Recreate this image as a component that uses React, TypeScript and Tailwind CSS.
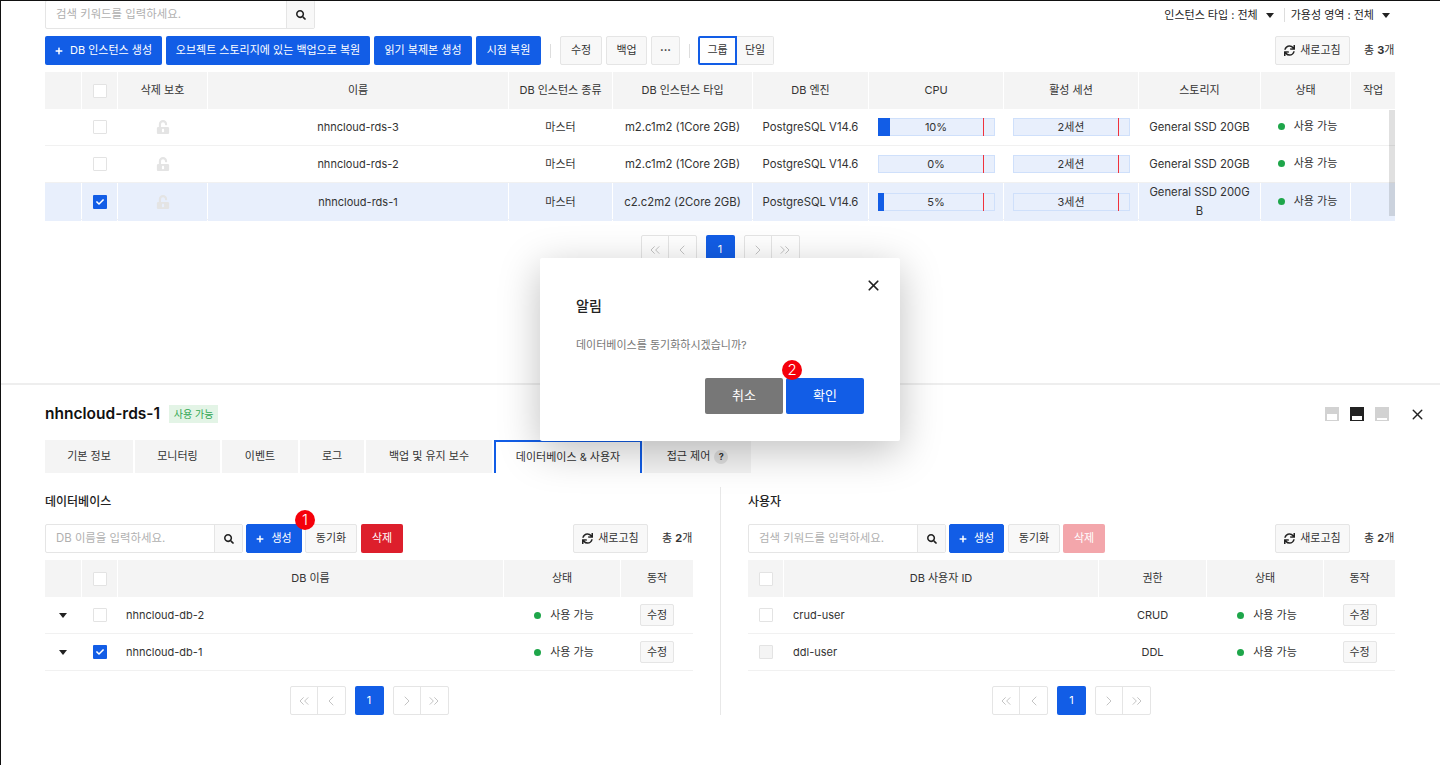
import { FaCheck, FaPlus, FaSearch, FaSync, FaUnlockAlt } from "react-icons/fa";
import { LuChevronLeft, LuChevronRight, LuChevronsLeft, LuChevronsRight, LuX } from "react-icons/lu";
import { ReactNode } from "react";

const font = "font-['Inter','Noto_Sans_CJK_KR',sans-serif]";
const mainCols = "grid-cols-[36px_35px_89px_300px_103px_139px_115px_134px_134px_121px_89px_44px]";
const dbCols = "grid-cols-[36px_35px_385px_116px_72px]";
const userCols = "grid-cols-[35px_314px_107px_116px_71px]";

function Checkbox({ checked, disabled }: { checked?: boolean; disabled?: boolean }) {
  if (checked) {
    return (
      <span className="flex h-[14px] w-[14px] items-center justify-center rounded-[1px] bg-[#125de6] text-white">
        <FaCheck size={8} />
      </span>
    );
  }
  return <span className={`block h-[14px] w-[14px] rounded-[1px] border border-[#e3e3e3] ${disabled ? "bg-[#f4f4f4]" : "bg-white"}`} />;
}

function Btn({ children, className = "" }: { children: ReactNode; className?: string }) {
  return (
    <button className={`flex h-[29px] items-center justify-center rounded-[2px] border border-[#e5e5e5] bg-[#f8f8f8] text-[11px] text-[#333] ${className}`}>
      {children}
    </button>
  );
}

function EditBtn() {
  return (
    <button className="flex h-[22px] w-[34px] items-center justify-center rounded-[2px] border border-[#e5e5e5] bg-[#f8f8f8] text-[11px] text-[#333]">
      수정
    </button>
  );
}

function Primary({ children, className = "" }: { children: ReactNode; className?: string }) {
  return (
    <button className={`flex h-[29px] items-center justify-center gap-[7px] rounded-[2px] bg-[#125de6] text-[11px] text-white ${className}`}>
      {children}
    </button>
  );
}

function Search({ placeholder, width }: { placeholder: string; width: string }) {
  return (
    <div className={`flex h-[29px] rounded-[2px] border border-[#e5e5e5] bg-white ${width}`}>
      <span className="flex flex-1 items-center pl-[10px] text-[11.4px] text-[#b0b0b0]">{placeholder}</span>
      <span className="flex w-[28px] items-center justify-center border-l border-[#e5e5e5] bg-[#f8f8f8] text-[#222]">
        <FaSearch size={10} />
      </span>
    </div>
  );
}

function Refresh() {
  return (
    <Btn className="w-[75px] gap-[5px]">
      <FaSync size={11} className="text-[#222]" />
      새로고침
    </Btn>
  );
}

function Total({ n }: { n: number }) {
  return (
    <span className="w-[31px] whitespace-nowrap text-[11px] text-[#333]">
      총 <b className="font-bold">{n}</b>개
    </span>
  );
}

function HeadCell({ children }: { children?: ReactNode }) {
  return <div className="flex items-center justify-center bg-[#f4f4f4] text-[11px] text-[#333]">{children}</div>;
}

function Cell({ children, className = "" }: { children?: ReactNode; className?: string }) {
  return <div className={`flex items-center justify-center text-center text-[11px] text-[#333] ${className}`}>{children}</div>;
}

function Status({ nudge }: { nudge?: boolean }) {
  return (
    <span className={`ml-[4px] flex items-center gap-[9px] text-[11px] text-[#333] ${nudge ? "-mt-[2px]" : ""}`}>
      <i className="block h-[7px] w-[7px] rounded-full bg-[#1ea64a]" />
      사용 가능
    </span>
  );
}

function Gauge({ label, fill = 0, mark }: { label: string; fill?: number; mark: number }) {
  return (
    <div className="relative flex h-[18px] w-[117px] items-center justify-center border border-[#cfe0fb] bg-[#e8effc] text-[11px] text-[#333]">
      {fill > 0 && <span className="absolute -inset-y-px -left-px bg-[#125de6]" style={{ width: fill }} />}
      <span className="absolute -inset-y-px w-px bg-[#f0323c]" style={{ left: mark }} />
      {label}
    </div>
  );
}

function Pager({ className = "" }: { className?: string }) {
  const cell = "flex h-full w-[27px] items-center justify-center text-[#c4c4c4]";
  return (
    <div className={`flex h-[29px] justify-center gap-[9px] ${className}`}>
      <div className="flex divide-x divide-[#e5e5e5] rounded-[2px] border border-[#e5e5e5]">
        <span className={cell}><LuChevronsLeft size={16} strokeWidth={1.5} /></span>
        <span className={cell}><LuChevronLeft size={16} strokeWidth={1.5} /></span>
      </div>
      <span className="flex w-[29px] items-center justify-center rounded-[2px] bg-[#125de6] text-[11px] text-white">1</span>
      <div className="flex divide-x divide-[#e5e5e5] rounded-[2px] border border-[#e5e5e5]">
        <span className={cell}><LuChevronRight size={16} strokeWidth={1.5} /></span>
        <span className={cell}><LuChevronsRight size={16} strokeWidth={1.5} /></span>
      </div>
    </div>
  );
}

function Caret({ className = "" }: { className?: string }) {
  return <span className={`block h-0 w-0 border-x-[4px] border-t-[5px] border-x-transparent border-t-[#222] ${className}`} />;
}

function Marker({ n, className = "" }: { n: number; className?: string }) {
  return (
    <span className={`absolute flex h-[20px] w-[20px] items-center justify-center rounded-full bg-[#f5000a] text-[15px] font-light text-white ${className}`}>
      {n}
    </span>
  );
}

const instances = [
  { name: "nhncloud-rds-3", type: "m2.c1m2 (1Core 2GB)", cpu: "10%", fill: 12, session: "2세션", storage: "General SSD 20GB" },
  { name: "nhncloud-rds-2", type: "m2.c1m2 (1Core 2GB)", cpu: "0%", fill: 0, session: "2세션", storage: "General SSD 20GB" },
  { name: "nhncloud-rds-1", type: "c2.c2m2 (2Core 2GB)", cpu: "5%", fill: 6, session: "3세션", storage: "General SSD 200GB", selected: true },
];

const mainHead = ["", "", "삭제 보호", "이름", "DB 인스턴스 종류", "DB 인스턴스 타입", "DB 엔진", "CPU", "활성 세션", "스토리지", "상태", "작업"];
const tabs = [
  ["기본 정보", "w-[88px]"],
  ["모니터링", "w-[85px]"],
  ["이벤트", "w-[76px]"],
  ["로그", "w-[64px]"],
  ["백업 및 유지 보수", "w-[126px]"],
];

function InstanceTable() {
  return (
    <div className="relative mt-[7px]">
      <div className={`grid h-[37px] gap-x-px ${mainCols}`}>
        {mainHead.map((h, i) => (
          <HeadCell key={i}>{i === 1 ? <Checkbox /> : h}</HeadCell>
        ))}
      </div>
      {instances.map((r) => (
        <div
          key={r.name}
          className={`grid h-[37px] gap-x-px border-b border-[#f1f1f1] ${mainCols} ${r.selected ? "[&>div]:bg-[#e8effc]" : ""}`}
        >
          <Cell />
          <Cell><Checkbox checked={r.selected} /></Cell>
          <Cell className="text-[#e4e4e4]"><FaUnlockAlt size={14} /></Cell>
          <Cell>{r.name}</Cell>
          <Cell>마스터</Cell>
          <Cell><span className="text-[11.3px]">{r.type}</span></Cell>
          <Cell><span className="text-[11.3px]">PostgreSQL V14.6</span></Cell>
          <Cell><Gauge label={r.cpu} fill={r.fill} mark={104} /></Cell>
          <Cell><Gauge label={r.session} mark={104} /></Cell>
          <Cell className="px-[10px] leading-[19px] break-all"><span className="text-[11.3px]">{r.storage}</span></Cell>
          <Cell><Status nudge /></Cell>
          <Cell />
        </div>
      ))}
      <span className="absolute right-0 top-[38px] h-[106px] w-[6px] bg-[#000]/12" />
    </div>
  );
}

function DbPanel() {
  return (
    <section className="w-[648px]">
      <h3 className="text-xs font-medium leading-[18px] text-[#222]">데이터베이스</h3>
      <div className="relative mt-[13px] flex items-center">
        <Search placeholder="DB 이름을 입력하세요." width="w-[198px]" />
        <Primary className="ml-[3px] w-[56px] border border-[#125de6]"><FaPlus size={8} />생성</Primary>
        <Btn className="ml-[3px] w-[52px]">동기화</Btn>
        <button className="ml-[4px] flex h-[29px] w-[42px] items-center justify-center rounded-[2px] bg-[#dd1f2c] text-[11px] text-white">삭제</button>
        <Marker n={1} className="left-[250px] -top-[14px]" />
        <div className="ml-auto flex items-center gap-[14px]">
          <Refresh />
          <Total n={2} />
        </div>
      </div>
      <div className={`mt-[7px] grid h-[37px] gap-x-px ${dbCols}`}>
        <HeadCell />
        <HeadCell><Checkbox /></HeadCell>
        <HeadCell>DB 이름</HeadCell>
        <HeadCell>상태</HeadCell>
        <HeadCell>동작</HeadCell>
      </div>
      {[
        { name: "nhncloud-db-2", checked: false },
        { name: "nhncloud-db-1", checked: true },
      ].map((r) => (
        <div key={r.name} className={`grid h-[37px] gap-x-px border-b border-[#f1f1f1] ${dbCols}`}>
          <Cell><Caret /></Cell>
          <Cell><Checkbox checked={r.checked} /></Cell>
          <Cell className="justify-start pl-[8px]">{r.name}</Cell>
          <Cell><Status /></Cell>
          <Cell><EditBtn /></Cell>
        </div>
      ))}
      <Pager className="mt-[15px]" />
    </section>
  );
}

function UserPanel() {
  return (
    <section className="w-[647px]">
      <h3 className="text-xs font-medium leading-[18px] text-[#222]">사용자</h3>
      <div className="mt-[13px] flex items-center">
        <Search placeholder="검색 키워드를 입력하세요." width="w-[198px]" />
        <Primary className="ml-[3px] w-[55px] border border-[#125de6]"><FaPlus size={8} />생성</Primary>
        <Btn className="ml-[4px] w-[52px]">동기화</Btn>
        <button className="ml-[3px] flex h-[29px] w-[42px] items-center justify-center rounded-[2px] bg-[#f3a6ab] text-[11px] text-white">삭제</button>
        <div className="ml-auto flex items-center gap-[14px]">
          <Refresh />
          <Total n={2} />
        </div>
      </div>
      <div className={`mt-[7px] grid h-[37px] gap-x-px ${userCols}`}>
        <HeadCell><Checkbox /></HeadCell>
        <HeadCell>DB 사용자 ID</HeadCell>
        <HeadCell>권한</HeadCell>
        <HeadCell>상태</HeadCell>
        <HeadCell>동작</HeadCell>
      </div>
      {[
        { id: "crud-user", role: "CRUD", disabled: false },
        { id: "ddl-user", role: "DDL", disabled: true },
      ].map((r) => (
        <div key={r.id} className={`grid h-[37px] gap-x-px border-b border-[#f1f1f1] ${userCols}`}>
          <Cell><Checkbox disabled={r.disabled} /></Cell>
          <Cell className="justify-start pl-[9px]">{r.id}</Cell>
          <Cell>{r.role}</Cell>
          <Cell><Status /></Cell>
          <Cell><EditBtn /></Cell>
        </div>
      ))}
      <Pager className="mt-[15px]" />
    </section>
  );
}

function LayoutIcon({ tone, bar }: { tone: string; bar: string }) {
  return (
    <span className={`relative block h-[14px] w-[14px] ${tone}`}>
      <i className={`absolute inset-x-[2px] bottom-[1px] block bg-white ${bar}`} />
    </span>
  );
}

export default function App() {
  return (
    <div className={`relative h-[765px] w-[1440px] overflow-hidden border-l border-t border-[#111] bg-white ${font}`}>
      <div className="h-[382px] pl-[44px] pr-[45px]">
        <div className="flex items-start justify-between">
          <div className="-mt-px">
            <Search placeholder="검색 키워드를 입력하세요." width="w-[270px]" />
          </div>
          <div className="mt-[6px] flex items-center pr-[5px] text-[11px] text-[#222]">
            인스턴스 타입 : 전체
            <Caret className="ml-[8px]" />
            <span className="ml-[10px] mr-[6px] h-[14px] w-px bg-[#ddd]" />
            가용성 영역 : 전체
            <Caret className="ml-[8px]" />
          </div>
        </div>
        <div className="mt-[7px] flex items-center">
          <Primary className="w-[117px]"><FaPlus size={8} />DB 인스턴스 생성</Primary>
          <Primary className="ml-[4px] w-[204px]">오브젝트 스토리지에 있는 백업으로 복원</Primary>
          <Primary className="ml-[4px] w-[98px]">읽기 복제본 생성</Primary>
          <Primary className="ml-[4px] w-[65px]">시점 복원</Primary>
          <span className="mx-[9px] h-[14px] w-px bg-[#ddd]" />
          <Btn className="w-[42px]">수정</Btn>
          <Btn className="ml-[4px] w-[41px]">백업</Btn>
          <Btn className="ml-[4px] w-[29px] font-bold leading-none">···</Btn>
          <span className="ml-[9px] mr-[8px] h-[14px] w-px bg-[#ddd]" />
          <button className="flex h-[29px] w-[39px] items-center justify-center rounded-l-[2px] border-2 border-[#125de6] bg-white text-[11px] text-[#333]">그룹</button>
          <Btn className="w-[37px] rounded-l-none border-l-0">단일</Btn>
          <div className="ml-auto flex items-center gap-[14px]">
            <Refresh />
            <Total n={3} />
          </div>
        </div>
        <InstanceTable />
        <Pager className="mt-[15px]" />
      </div>

      <div className="h-[2px] bg-[#eeeeee]" />

      <div className="pl-[44px] pr-[45px]">
        <div className="mt-[20px] flex h-[18px] items-center">
          <h2 className="text-[15.5px] font-semibold text-[#111]">nhncloud-rds-1</h2>
          <span className="ml-[9px] flex h-[18px] w-[49px] items-center justify-center bg-[#e3f4e6] text-[10px] text-[#2fa650]">사용 가능</span>
          <div className="ml-auto flex items-center">
            <LayoutIcon tone="bg-[#d2d2d2]" bar="h-[6px]" />
            <span className="ml-[11px]"><LayoutIcon tone="bg-[#222]" bar="h-[4px]" /></span>
            <span className="ml-[11px]"><LayoutIcon tone="bg-[#d2d2d2]" bar="h-[2px]" /></span>
            <LuX size={17} strokeWidth={2} className="ml-[20px] -mr-[31px] text-[#222]" />
          </div>
        </div>
        <div className="mt-[17px] flex h-[33px] gap-[2px]">
          {tabs.map(([label, w]) => (
            <span key={label} className={`flex items-center justify-center bg-[#f4f4f4] text-[11px] text-[#333] ${w}`}>{label}</span>
          ))}
          <span className="flex w-[148px] items-center justify-center border-x-2 border-t-2 border-[#125de6] bg-white text-[11px] text-[#333]">데이터베이스 & 사용자</span>
          <span className="flex w-[107px] items-center justify-center gap-[4px] bg-[#f4f4f4] text-[11px] text-[#333]">
            접근 제어
            <i className="flex h-[14px] w-[14px] items-center justify-center rounded-full bg-[#ddd] text-[9px] font-bold not-italic text-[#333]">?</i>
          </span>
        </div>
        <div className="mt-[20px] flex">
          <DbPanel />
          <div className="ml-[27px] mt-[-6px] h-[228px] w-px bg-[#e8e8e8]" />
          <div className="ml-[27px]"><UserPanel /></div>
        </div>
      </div>

      <div className="absolute left-[539px] top-[257px] h-[183px] w-[360px] rounded-[2px] bg-white px-[36px] shadow-[0_10px_40px_rgba(0,0,0,0.25)]">
        <LuX size={17} strokeWidth={2.4} className="absolute right-[18px] top-[19px] text-[#222]" />
        <h4 className="mt-[38px] text-sm font-medium leading-[20px] text-[#222]">알림</h4>
        <p className="mt-[20px] text-[11px] leading-[18px] text-[#777]">데이터베이스를 동기화하시겠습니까?</p>
        <div className="absolute bottom-[27px] right-[36px] flex gap-[3px]">
          <button className="h-[36px] w-[78px] rounded-[2px] bg-[#777] text-[13px] text-white">취소</button>
          <button className="h-[36px] w-[78px] rounded-[2px] bg-[#125de6] text-[13px] text-white">확인</button>
        </div>
        <Marker n={2} className="left-[242px] top-[102px]" />
      </div>
    </div>
  );
}
